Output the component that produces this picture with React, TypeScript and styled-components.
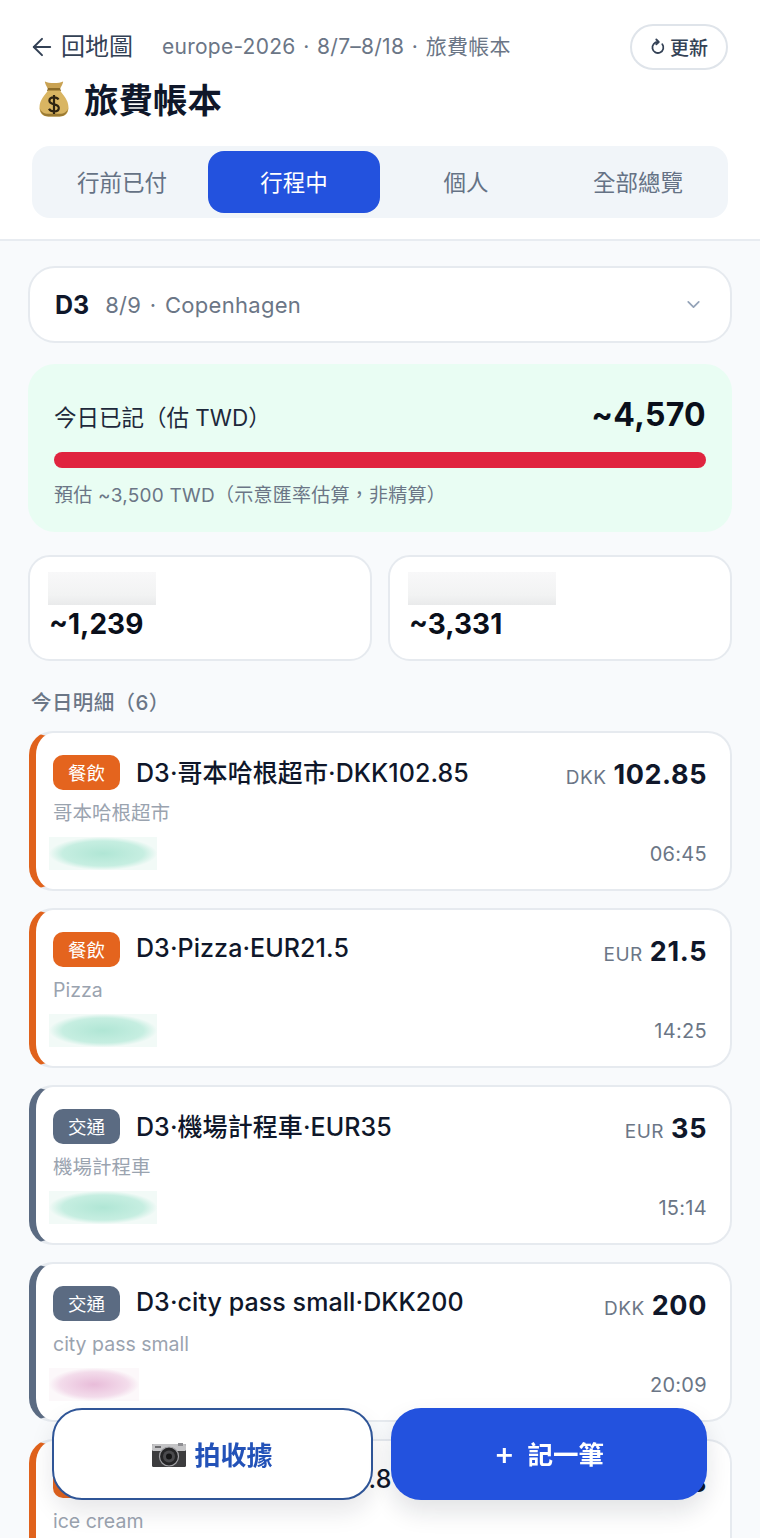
import styled, { createGlobalStyle } from "styled-components";
import { ArrowLeft, ChevronDown } from "lucide-react";

const GlobalStyle = createGlobalStyle`
  html, body {
    margin: 0;
    height: 100%;
    overflow: hidden;
    background: #f8fafc;
  }
  * {
    box-sizing: border-box;
  }
  body {
    font-family: Inter, "Noto Sans CJK TC", "Noto Sans", sans-serif;
    color: #0f172a;
  }
`;

const tabs = ["行前已付", "行程中", "個人", "全部總覽"];

const expenses = [
  { tag: "餐飲", kind: "food", title: "D3·哥本哈根超市·DKK102.85", currency: "DKK", amount: "102.85", note: "哥本哈根超市", time: "06:45", who: "green" },
  { tag: "餐飲", kind: "food", title: "D3·Pizza·EUR21.5", currency: "EUR", amount: "21.5", note: "Pizza", time: "14:25", who: "green" },
  { tag: "交通", kind: "transit", title: "D3·機場計程車·EUR35", currency: "EUR", amount: "35", note: "機場計程車", time: "15:14", who: "green" },
  { tag: "交通", kind: "transit", title: "D3·city pass small·DKK200", currency: "DKK", amount: "200", note: "city pass small", time: "20:09", who: "pink" },
  { tag: "餐飲", kind: "food", title: "D3·ice cream·EUR4.8", currency: "EUR", amount: "4.8", note: "ice cream", time: "21:30", who: "green" },
];

function MoneyBag() {
  return (
    <svg width="30" height="37" viewBox="0 0 30 37" aria-hidden="true">
      <path d="M6 1.500c2.500 1.200 5 1.500 9 1.500s6.500-.3 9-1.500c.5 0-.5 3-3.500 8.500h-11C6.500 4.500 5.500 1.500 6 1.500z" fill="#c9a253" />
      <path d="M9 8h12l1 3H8z" fill="#8a6a28" />
      <path d="M9 10.500h12c2.500 4 8.500 9 8.500 17 0 6-3.500 9-9 9h-11c-5.500 0-9-3-9-9 0-8 6-13 8.500-17z" fill="#d9b562" />
      <path d="M.7 28c.6 5 4 8.500 8.800 8.500h11c4.800 0 8.200-3.500 8.800-8.500-1 3.500-4 5.800-8.800 5.800h-11C4.700 33.800 1.700 31.500.7 28z" fill="#9a7a33" />
      <path d="M19.500 19.500c-.8-1.400-2.300-2.100-4.500-2.100-2.800 0-4.600 1.300-4.600 3.400 0 4.700 9.400 2.400 9.400 7.100 0 2.200-2 3.500-4.800 3.500-2.400 0-4.100-.9-5-2.600M15 15v19" fill="none" stroke="#2e2412" strokeWidth="2.200" />
    </svg>
  );
}

function Camera() {
  return (
    <CameraIcon width="34" height="24" viewBox="0 0 34 24" aria-hidden="true">
      <rect x="0" y="1" width="34" height="23" rx="1.500" fill="#3c3c3e" />
      <rect x="0" y="1" width="34" height="7" rx="1.500" fill="#c4c4c6" />
      <rect x="3" y="3" width="6" height="2" fill="#6b6b6e" />
      <rect x="26" y="0" width="5" height="3" fill="#8e8e92" />
      <circle cx="17" cy="13.500" r="9.500" fill="#252527" stroke="#a0a0a4" strokeWidth="1.200" />
      <circle cx="17" cy="13.500" r="6" fill="#4a4a4d" />
      <circle cx="17" cy="13.500" r="3" fill="#151516" />
    </CameraIcon>
  );
}

function RefreshIcon() {
  return (
    <svg width="16" height="17" viewBox="0 0 16 17" fill="none" stroke="#334155" strokeWidth="1.800" strokeLinecap="round" strokeLinejoin="round" aria-hidden="true">
      <path d="M12.300 6.200A5.500 5.500 0 1 1 8 4" />
      <path d="M6.300 1.500 8.800 4 6.300 6.300" />
    </svg>
  );
}

export default function App() {
  return (
    <>
      <GlobalStyle />
      <Page>
        <Header>
          <TopRow>
            <BackLink>
              <BackArrow size={28} strokeWidth={1.7} />
              回地圖
            </BackLink>
            <Meta>europe-2026 · 8/7–8/18 · 旅費帳本</Meta>
            <RefreshButton>
              <RefreshIcon />
              更新
            </RefreshButton>
          </TopRow>
          <Title>
            <MoneyBag />
            旅費帳本
          </Title>
          <Tabs>
            {tabs.map((tab, index) => (
              <Tab key={tab} active={index === 1}>
                {tab}
              </Tab>
            ))}
          </Tabs>
        </Header>

        <Content>
          <DaySelect>
            <DayCode>D3</DayCode>
            <DayInfo>8/9 · Copenhagen</DayInfo>
            <ChevronDown size={21} color="#94a3b8" strokeWidth={2} />
          </DaySelect>

          <Summary>
            <SummaryTop>
              <SummaryLabel>今日已記（估 TWD）</SummaryLabel>
              <SummaryValue>~4,570</SummaryValue>
            </SummaryTop>
            <Bar />
            <SummaryNote>預估 ~3,500 TWD（示意匯率估算，非精算）</SummaryNote>
          </Summary>

          <Stats>
            <StatCard>
              <BlurLabel width={108} />
              <StatValue>~1,239</StatValue>
            </StatCard>
            <StatCard>
              <BlurLabel width={148} />
              <StatValue>~3,331</StatValue>
            </StatCard>
          </Stats>

          <SectionLabel>今日明細（6）</SectionLabel>

          <List>
            {expenses.map((item) => (
              <Card key={item.title} kind={item.kind}>
                <CardTop>
                  <Tag kind={item.kind}>{item.tag}</Tag>
                  <CardTitle>{item.title}</CardTitle>
                  <Amount>
                    <Currency>{item.currency}</Currency>
                    {item.amount}
                  </Amount>
                </CardTop>
                <Note>{item.note}</Note>
                <CardBottom>
                  <BlurName who={item.who} />
                  <Time>{item.time}</Time>
                </CardBottom>
              </Card>
            ))}
          </List>
        </Content>

        <Actions>
          <PhotoButton>
            <Camera />
            拍收據
          </PhotoButton>
          <AddButton>
            <PlusMark>+</PlusMark>
            記一筆
          </AddButton>
        </Actions>
      </Page>
    </>
  );
}

const CameraIcon = styled.svg`
  margin-top: 4px;
`;

const BackArrow = styled(ArrowLeft)`
  margin: 0 -4px 0 -4px;
`;

const Page = styled.div`
  width: 760px;
  height: 1538px;
  overflow: hidden;
  background: #f8fafc;
`;

const Header = styled.header`
  height: 241px;
  padding: 23px 32px 0;
  background: #ffffff;
  border-bottom: 2px solid #e8ecf1;
`;

const TopRow = styled.div`
  display: flex;
  align-items: center;
  height: 47px;
`;

const BackLink = styled.div`
  display: flex;
  align-items: center;
  gap: 9px;
  font-size: 24px;
  font-weight: 400;
  color: #334155;
  line-height: 44px;
`;

const Meta = styled.div`
  flex: 1;
  margin-left: 29px;
  font-size: 21px;
  letter-spacing: 0.25px;
  word-spacing: 1.5px;
  color: #6b7686;
  line-height: 44px;
`;

const RefreshButton = styled.div`
  display: flex;
  align-items: center;
  justify-content: center;
  gap: 4px;
  width: 98px;
  height: 46px;
  border: 2px solid #dfe4ea;
  border-radius: 23px;
  font-size: 19px;
  font-weight: 500;
  color: #334155;
`;

const Title = styled.h1`
  display: flex;
  align-items: center;
  gap: 15px;
  height: 44px;
  margin: 6px 0 0 7px;
  font-size: 34.5px;
  font-weight: 700;
  color: #0f172a;
`;

const Tabs = styled.div`
  display: grid;
  grid-template-columns: repeat(4, 172px);
  height: 72px;
  margin-top: 26px;
  padding: 5px 4px;
  border-radius: 18px;
  background: #f1f5f9;
`;

const Tab = styled.div<{ active: boolean }>`
  display: flex;
  align-items: center;
  justify-content: center;
  padding-bottom: 3px;
  border-radius: 16px;
  font-size: 22.5px;
  font-weight: 400;
  background: ${(props) => (props.active ? "#2352de" : "transparent")};
  color: ${(props) => (props.active ? "#ffffff" : "#657285")};
`;

const Content = styled.main`
  padding: 25px 28px 0;
`;

const DaySelect = styled.div`
  display: flex;
  align-items: center;
  height: 77px;
  padding: 0 26px 0 25px;
  background: #ffffff;
  border: 2px solid #e6eaef;
  border-radius: 27px;
`;

const DayCode = styled.span`
  font-size: 25px;
  font-weight: 700;
  color: #0f172a;
`;

const DayInfo = styled.span`
  flex: 1;
  margin-left: 16px;
  font-size: 22px;
  letter-spacing: 0.3px;
  word-spacing: 2px;
  color: #6b7686;
`;

const Summary = styled.section`
  height: 168px;
  margin-top: 21px;
  padding: 30px 26px 0;
  background: #e9fdf3;
  border-radius: 27px;
`;

const SummaryTop = styled.div`
  display: flex;
  align-items: center;
  justify-content: space-between;
  height: 40px;
`;

const SummaryLabel = styled.span`
  padding-top: 4px;
  font-size: 22.5px;
  font-weight: 400;
  color: #1e293b;
`;

const SummaryValue = styled.span`
  font-size: 32px;
  font-weight: 700;
  letter-spacing: 0.3px;
  color: #0a0f1a;
`;

const Bar = styled.div`
  height: 16px;
  margin-top: 18px;
  border-radius: 8px;
  background: #e0243f;
`;

const SummaryNote = styled.div`
  margin-top: 12px;
  font-size: 19px;
  letter-spacing: 0.25px;
  color: #6b7686;
`;

const Stats = styled.div`
  display: grid;
  grid-template-columns: 1fr 1fr;
  gap: 16px;
  margin-top: 23px;
`;

const StatCard = styled.div`
  height: 106px;
  padding: 15px 20px 0 18px;
  background: #ffffff;
  border: 2px solid #e6eaef;
  border-radius: 22px;
`;

const BlurLabel = styled.div<{ width: number }>`
  width: ${(props) => props.width}px;
  height: 33px;
  background: linear-gradient(#f8f8f9, #f2f3f3 70%, #e9eaeb);
`;

const StatValue = styled.div`
  margin: 2px 0 0 1px;
  font-size: 28px;
  font-weight: 700;
  color: #0a0f1a;
`;

const SectionLabel = styled.div`
  margin: 28px 0 14px 3px;
  height: 28px;
  line-height: 28px;
  font-size: 20.5px;
  font-weight: 500;
  letter-spacing: 0.4px;
  color: #6b7686;
`;

const List = styled.div`
  display: flex;
  flex-direction: column;
  gap: 17px;
`;

const Card = styled.article<{ kind: string }>`
  flex: none;
  height: 160px;
  padding: 22px 23px 0 17px;
  margin-left: 1px;
  background: #ffffff;
  border: 2px solid #e6eaef;
  border-left: 7px solid ${(props) => (props.kind === "food" ? "#e0621c" : "#5b6b82")};
  border-radius: 24px;
`;

const CardTop = styled.div`
  display: flex;
  align-items: center;
  height: 35px;
`;

const Tag = styled.span<{ kind: string }>`
  display: flex;
  align-items: center;
  justify-content: center;
  flex: none;
  width: 67px;
  height: 35px;
  padding-bottom: 2px;
  border-radius: 10px;
  font-size: 18.5px;
  font-weight: 400;
  color: #ffffff;
  background: ${(props) => (props.kind === "food" ? "#e4641e" : "#5b6b82")};
`;

const CardTitle = styled.span`
  flex: 1;
  margin: 0 0 3px 16px;
  font-size: 25px;
  font-weight: 500;
  letter-spacing: 0.08px;
  color: #0f172a;
`;

const Amount = styled.span`
  padding-top: 3px;
  font-size: 27px;
  font-weight: 700;
  letter-spacing: 0.6px;
  color: #0f172a;
`;

const Currency = styled.span`
  margin-right: 7px;
  font-size: 19px;
  font-weight: 400;
  letter-spacing: 0.5px;
  color: #6b7686;
`;

const Note = styled.div`
  margin-top: 9px;
  height: 28px;
  line-height: 28px;
  font-size: 19.5px;
  color: #9aa3af;
`;

const CardBottom = styled.div`
  display: flex;
  align-items: center;
  justify-content: space-between;
  margin-top: 10px;
`;

const BlurName = styled.div<{ who: string }>`
  width: ${(props) => (props.who === "pink" ? 90 : 108)}px;
  height: 33px;
  margin-left: -4px;
  background: ${(props) =>
    props.who === "pink"
      ? "radial-gradient(closest-side, #e8bcd9, #f3dceb 75%, #fcf8fa)"
      : "radial-gradient(closest-side, #b0e6d5, #c6eee1 75%, #f2faf7)"};
`;

const Time = styled.span`
  font-size: 20px;
  letter-spacing: 0.3px;
  color: #6b7686;
`;

const Actions = styled.div`
  position: fixed;
  left: 52px;
  bottom: 38px;
  display: grid;
  grid-template-columns: 321px 316px;
  gap: 18px;
  height: 92px;
`;

const PhotoButton = styled.div`
  display: flex;
  align-items: center;
  justify-content: center;
  gap: 8px;
  padding-bottom: 2px;
  background: #ffffff;
  border: 2px solid #2f5597;
  border-radius: 30px;
  font-size: 26px;
  font-weight: 600;
  color: #2352b8;
  box-shadow: 0 12px 24px rgba(15, 23, 42, 0.1);
`;

const AddButton = styled.div`
  display: flex;
  align-items: center;
  justify-content: center;
  gap: 13px;
  padding-bottom: 4px;
  background: #2352de;
  border-radius: 30px;
  font-size: 25.5px;
  font-weight: 600;
  color: #ffffff;
  box-shadow: 0 12px 24px rgba(15, 23, 42, 0.12);
`;

const PlusMark = styled.span`
  font-size: 31px;
  font-weight: 500;
`;
